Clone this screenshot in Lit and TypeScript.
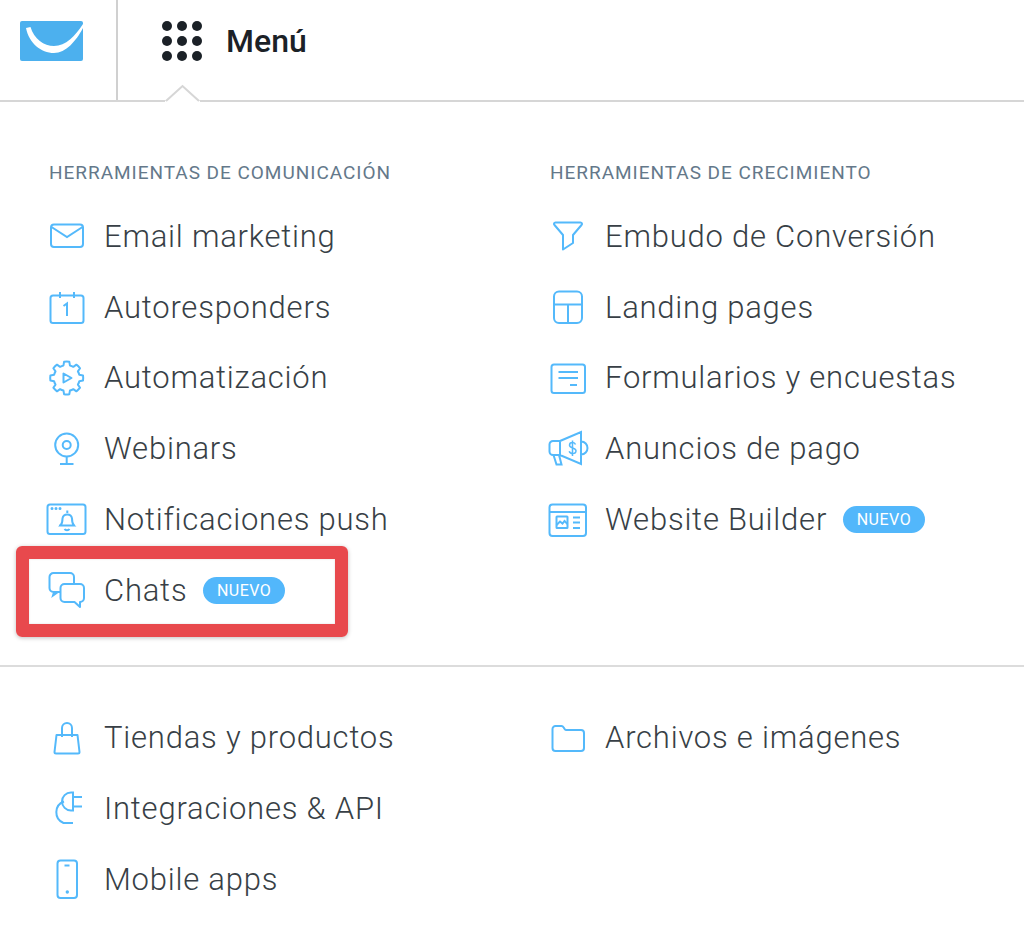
import { LitElement, html, css, svg } from "lit";
import { customElement } from "lit/decorators.js";

function gearPath(cx: number, cy: number, ro: number, ri: number, n: number) {
  let d = "";
  const step = (Math.PI * 2) / n;
  for (let i = 0; i < n; i++) {
    const a = i * step - Math.PI / 2;
    const pts: [number, number][] = [
      [ri, a - step * 0.32],
      [ro, a - step * 0.2],
      [ro, a + step * 0.2],
      [ri, a + step * 0.32],
    ];
    pts.forEach(([r, t], k) => {
      const x = (cx + r * Math.cos(t)).toFixed(2);
      const y = (cy + r * Math.sin(t)).toFixed(2);
      if (i === 0 && k === 0) d += `M${x} ${y}`;
      else if (k === 2) d += `A${ro} ${ro} 0 0 1 ${x} ${y}`;
      else d += `L${x} ${y}`;
    });
    const t2 = a + step * 0.68;
    const x2 = (cx + ri * Math.cos(t2)).toFixed(2);
    const y2 = (cy + ri * Math.sin(t2)).toFixed(2);
    d += `A${ri} ${ri} 0 0 1 ${x2} ${y2}`;
  }
  return d + "Z";
}

const icons: Record<string, unknown> = {
  mail: svg`<rect x="6" y="10.500" width="32" height="22.500" rx="3"/><path d="M6.500 13 22 23 37.500 13"/>`,
  cal: svg`<rect x="5.500" y="10.500" width="33" height="27.500" rx="2.500"/><path d="M15 7v6M29 7v6M18.500 21l3.500-2.500V31"/>`,
  gear: svg`<path d=${gearPath(21.7, 22, 16.5, 13, 8)} stroke-linejoin="round"/><path d="M18.500 17.500v9l8-4.500z" stroke-linejoin="round"/>`,
  web: svg`<circle cx="21.700" cy="18" r="11.500"/><circle cx="21.700" cy="18" r="4"/><path d="M21.700 30v7M15 37h13.500"/>`,
  bell: svg`<rect x="2.500" y="6.500" width="38" height="29.500" rx="2.500"/><path d="M15.500 27.500c2-2 2-4 2-7a4.800 4.800 0 0 1 9.500 0c0 3 0 5 2 7zM14 27.500h16M19.500 31c1 1.500 4 1.500 5 0M22.300 12.500v2.500"/><path class="dot" d="M7 10.500h.01M11 10.500h.01M15 10.500h.01"/>`,
  chat: svg`<path d="M15.500 24H8.500a4 4 0 0 1-4-4V9a4 4 0 0 1 4-4h16.500a4 4 0 0 1 4 4v7M9 24l-1 3.500 5-3.500"/><path d="M19.500 16h15.500a4 4 0 0 1 4 4v10a4 4 0 0 1-4 4v5l-5.500-5H19.500a4 4 0 0 1-4-4V20a4 4 0 0 1 4-4z" stroke-linejoin="round"/>`,
  funnel: svg`<path d="M9.500 8.500h25c1.500 0 2 1.500 1 2.500L27 21v8l-10 6.500V21L8.500 11c-1-1-.5-2.500 1-2.500z" stroke-linejoin="round"/>`,
  land: svg`<rect x="8" y="6.500" width="28" height="31.500" rx="5"/><path d="M8 19.500h28M22 19.500V38"/>`,
  form: svg`<rect x="5.500" y="8.500" width="33.500" height="28.500" rx="2.500"/><path d="M12.500 16h19.500M12.500 22h19.500M24 29h7"/>`,
  mega: svg`<path d="M14 14 35 5v32L14 28H7a3.500 3.500 0 0 1-3.500-3.500v-7A3.500 3.500 0 0 1 7 14zM14 14v14M35 14.500c4 0 6.500 3 6.500 6.500s-2.500 6.500-6.500 6.500M7.500 28l3 9.500h5l-2.500-9.500"/><path d="M29.500 17.500c-.5-1.500-1.500-2-3-2-1.800 0-3 1-3 2.700 0 3.500 6.500 2 6.500 5.500 0 1.800-1.500 2.800-3.500 2.800-1.500 0-2.800-.8-3.300-2.300M26.500 13.500v15.500" stroke-width="1.500"/>`,
  site: svg`<rect x="3.500" y="6.500" width="36.500" height="31.500" rx="3"/><path d="M3.500 14h36.500M27 19.500h7M27 24.500h7M27 30h7"/><rect x="10.500" y="18.500" width="11" height="11.500" rx=".5"/><path d="M10.500 27l3.500-3.500 2.500 2 2-2.500 3 3"/>`,
  bag: svg`<path d="M11.500 19h21l2 17a1.500 1.500 0 0 1-1.500 1.500H11a1.500 1.500 0 0 1-1.500-1.500z" stroke-linejoin="round"/><path d="M17 21v-9a5 5 0 0 1 10 0v9"/>`,
  plug: svg`<path d="M28 6.500h-2a9 9 0 0 0 0 18h2zM28 11h9M28 20.500h9"/><path d="M19 15.500A11.500 11.500 0 0 0 18.500 37H28"/>`,
  phone: svg`<rect x="12.500" y="3.500" width="19.500" height="37.500" rx="3"/><path d="M19.500 8.500h5"/><circle class="solid" cx="22.300" cy="35" r="1.700"/>`,
  folder: svg`<path d="M6.500 13a3 3 0 0 1 3-3h6c1.500 0 1.700.8 2.500 2 .5.800 1 2 2 2H35a3 3 0 0 1 3 3v15a3 3 0 0 1-3 3H9.500a3 3 0 0 1-3-3z" stroke-linejoin="round"/>`,
};

interface Item { icon: string; label: string; badge?: boolean; marked?: boolean }

const left: Item[] = [
  { icon: "mail", label: "Email marketing" },
  { icon: "cal", label: "Autoresponders" },
  { icon: "gear", label: "Automatización" },
  { icon: "web", label: "Webinars" },
  { icon: "bell", label: "Notificaciones push" },
  { icon: "chat", label: "Chats", badge: true, marked: true },
];
const right: Item[] = [
  { icon: "funnel", label: "Embudo de Conversión" },
  { icon: "land", label: "Landing pages" },
  { icon: "form", label: "Formularios y encuestas" },
  { icon: "mega", label: "Anuncios de pago" },
  { icon: "site", label: "Website Builder", badge: true },
];
const left2: Item[] = [
  { icon: "bag", label: "Tiendas y productos" },
  { icon: "plug", label: "Integraciones & API" },
  { icon: "phone", label: "Mobile apps" },
];
const right2: Item[] = [{ icon: "folder", label: "Archivos e imágenes" }];

@customElement("app-root")
export class AppRoot extends LitElement {
  static styles = css`
    :host {
      display: block;
      width: 1024px;
      height: 930px;
      background: #fff;
      overflow: hidden;
      font-family: Roboto, sans-serif;
      color: #383f46;
    }
    .header {
      position: relative;
      display: flex;
      align-items: stretch;
      height: 100px;
      border-bottom: 2px solid #d6d6d6;
    }
    .logo-cell {
      flex: none;
      box-sizing: border-box;
      width: 118px;
      border-right: 2px solid #d0d0d0;
      display: flex;
      align-items: center;
      padding: 0 0 18px 20px;
    }
    .logo { width: 63px; height: 40px; display: block; }
    .menu { display: flex; align-items: center; gap: 23px; padding: 0 0 18px 44px; }
    .dots { width: 41px; height: 41px; display: block; }
    .menu-label { font-size: 32px; font-weight: 500; color: #1b2127; }
    .caret { position: absolute; left: 164px; top: 84px; width: 38px; height: 18px; }
    .sec { display: grid; grid-template-columns: 501px 1fr; padding-left: 50px; }
    .sec.one { padding-top: 57px; padding-bottom: 39px; border-bottom: 2px solid #dcdcdc; }
    .sec.two { padding-top: 35.400px; }
    .col { display: flex; flex-direction: column; }
    .title {
      height: 28px;
      line-height: 28px;
      font-size: 19px;
      letter-spacing: 0.97px;
      color: #64788a;
      margin-bottom: 14px;
      margin-left: -1px;
    }
    .row {
      position: relative;
      display: flex;
      align-items: center;
      height: 70.800px;
      gap: 14px;
      font-size: 31px;
      font-weight: 300;
      letter-spacing: 0.78px;
      white-space: nowrap;
    }
    .ico {
      width: 45px;
      height: 44px;
      margin-left: -5px;
      flex: none;
      fill: none;
      stroke: #54b9fb;
      stroke-width: 2;
    }
    .ico .dot { stroke-width: 3; stroke-linecap: round; }
    .ico .solid { fill: #54b9fb; stroke: none; }
    .badge {
      margin-left: 1.500px;
      height: 27px;
      line-height: 27px;
      padding: 0 13.500px 0 14px;
      border-radius: 14px;
      background: #52b7fb;
      color: #fff;
      font-size: 16px;
      font-weight: 400;
      letter-spacing: 0.5px;
    }
    .mark {
      position: absolute;
      left: -34px;
      top: -8.600px;
      width: 332px;
      height: 91px;
      box-sizing: border-box;
      border: 13px solid #e8494d;
      border-radius: 6px;
      box-shadow: 0 1px 4px rgba(0, 0, 0, 0.25), inset 0 0 2px rgba(0, 0, 0, 0.15);
    }
  `;

  private row(it: Item) {
    return html`<div class="row">
      <svg class="ico" viewBox="0 0 45 44">${icons[it.icon]}</svg>
      <span>${it.label}</span>
      ${it.badge ? html`<span class="badge">NUEVO</span>` : null}
      ${it.marked ? html`<div class="mark"></div>` : null}
    </div>`;
  }

  render() {
    return html`
      <div class="header">
        <div class="logo-cell">
          <svg class="logo" viewBox="0 0 63 40">
            <rect width="63" height="40" rx="2" fill="#4cb0ee" />
            <path fill="#fff" d="M6 7C9 22 21 32 34 32 46 32 56 20 63 7V3C55 15 46 25 34 25 24 25 14 18 10.500 6z" />
          </svg>
        </div>
        <div class="menu">
          <svg class="dots" viewBox="0 0 41 41" fill="#1b2127">
            ${[5, 20, 35].map((y) =>
              [5, 20, 35].map((x) => svg`<circle cx=${x} cy=${y} r="5" />`)
            )}
          </svg>
          <span class="menu-label">Menú</span>
        </div>
        <svg class="caret" viewBox="0 0 38 18">
          <path d="M1 17 19 1.500 36 17V18H1z" fill="#fff" stroke="none" />
          <path d="M2 17 18.500 2 35 17" fill="none" stroke="#d6d6d6" stroke-width="2" />
        </svg>
      </div>
      <div class="sec one">
        <div class="col">
          <div class="title">HERRAMIENTAS DE COMUNICACIÓN</div>
          ${left.map((i) => this.row(i))}
        </div>
        <div class="col">
          <div class="title">HERRAMIENTAS DE CRECIMIENTO</div>
          ${right.map((i) => this.row(i))}
        </div>
      </div>
      <div class="sec two">
        <div class="col">${left2.map((i) => this.row(i))}</div>
        <div class="col">${right2.map((i) => this.row(i))}</div>
      </div>
    `;
  }
}
